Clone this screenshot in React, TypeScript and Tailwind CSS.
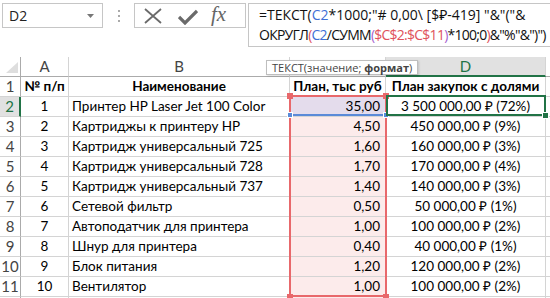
import React from 'react';

const rows = [
  { n: '1', name: 'Принтер HP Laser Jet 100 Color', plan: '35,00', buy: '3 500 000,00 ₽ (72%)' },
  { n: '2', name: 'Картриджы к принтеру HP', plan: '4,50', buy: '450 000,00 ₽ (9%)' },
  { n: '3', name: 'Картридж универсальный 725', plan: '1,60', buy: '160 000,00 ₽ (3%)' },
  { n: '4', name: 'Картридж универсальный 728', plan: '1,70', buy: '170 000,00 ₽ (4%)' },
  { n: '5', name: 'Картридж универсальный 737', plan: '1,40', buy: '140 000,00 ₽ (3%)' },
  { n: '6', name: 'Сетевой фильтр', plan: '0,50', buy: '50 000,00 ₽ (1%)' },
  { n: '7', name: 'Автоподатчик для принтера', plan: '1,00', buy: '100 000,00 ₽ (2%)' },
  { n: '8', name: 'Шнур для принтера', plan: '0,40', buy: '40 000,00 ₽ (1%)' },
  { n: '9', name: 'Блок питания', plan: '1,20', buy: '120 000,00 ₽ (2%)' },
  { n: '10', name: 'Вентилятор', plan: '1,00', buy: '100 000,00 ₽ (2%)' },
];

const cellFont = { fontFamily: 'Lato, "Liberation Sans", sans-serif' };
const uiFont = { fontFamily: '"Open Sans", "Noto Sans", sans-serif' };

const Handle = ({ className }: { className: string }) => (
  <div className={`absolute w-[6px] h-[6px] ${className}`} />
);

export default function App() {
  return (
    <div className="w-[550px] h-[298px] overflow-hidden bg-white relative" style={cellFont}>
      {/* formula bar */}
      <div className="flex items-start h-[57px] pt-[3px] pl-[2px]" style={uiFont}>
        <div className="shrink-0 w-[101px] h-[25px] border border-[#c6c6c6] flex items-center justify-between pl-[6px] pr-[8px] text-[14px] text-[#222]">
          <span>D2</span>
          <svg width="7" height="4" viewBox="0 0 7 4"><path d="M0 0h7L3.5 4z" fill="#777" /></svg>
        </div>
        <div className="shrink-0 w-[31px] h-[25px] flex flex-col items-center justify-center gap-[3px]">
          <div className="w-[2px] h-[2px] bg-[#aaa]" />
          <div className="w-[2px] h-[2px] bg-[#aaa]" />
          <div className="w-[2px] h-[2px] bg-[#aaa]" />
        </div>
        <div className="shrink-0 w-[112px] h-[25px] border border-[#c6c6c6] flex items-center">
          <svg width="20" height="18" viewBox="0 0 20 18" className="ml-[8px]">
            <path d="M2 2L18 16M18 2L2 16" stroke="#6a6a6a" strokeWidth="1.8" />
          </svg>
          <svg width="20" height="16" viewBox="0 0 20 16" className="ml-[15px] mt-[3px]">
            <path d="M1 8L7 14L19 2" stroke="#6a6a6a" strokeWidth="3.2" fill="none" />
          </svg>
          <span className="ml-[13px] text-[21px] italic text-[#666] leading-none -mt-[3px]" style={{ fontFamily: '"Liberation Serif", serif' }}>fx</span>
        </div>
        <div className="ml-[2px] flex-1 min-w-0 overflow-hidden h-[44px] border border-r-0 border-[#c6c6c6] pl-[10px] pt-[1px] text-[14px] leading-[20px] text-[#111] whitespace-nowrap">
          <div>
            =ТЕКСТ(<span className="text-[#3f70d6]">C2</span>*1000;"# 0,00\ [$₽-419] "&amp;"("&amp;
          </div>
          <div className="tracking-[-0.75px]">
            ОКРУГЛ<span className="text-[#e0525c]">(</span><span className="text-[#3f70d6]">C2</span>/СУММ<span className="text-[#a65fcf]">(</span><span className="text-[#e0525c]">$C$2:$C$11</span><span className="text-[#a65fcf]">)</span>*100;0<span className="text-[#e0525c]">)</span>&amp;"%"&amp;")")
          </div>
        </div>
      </div>

      {/* grid */}
      <div className="grid grid-cols-[21px_48px_221px_96px_160px_4px] auto-rows-[20px] text-[13.5px] text-black">
        {/* header */}
        <div className="h-[20px] border-r border-b border-[#ababab] relative">
          <svg width="12" height="11" viewBox="0 0 12 11" className="absolute left-[6px] top-[5px]">
            <path d="M12 0V11H0z" fill="#dedede" />
          </svg>
        </div>
        <div className="border-r border-b border-[#ababab] border-r-[#d4d4d4] flex items-center justify-center text-[15px] text-[#444]">A</div>
        <div className="border-r border-b border-[#ababab] border-r-[#d4d4d4] flex items-center justify-center text-[15px] text-[#444]">B</div>
        <div className="border-r border-b border-[#ababab] border-r-[#d4d4d4]" />
        <div className="bg-[#e1e1e1] border-r border-r-[#d4d4d4] border-b-2 border-b-[#217346] flex items-center justify-center text-[15px] text-[#217346]">D</div>
        <div className="border-b border-[#ababab]" />

        {/* row 1 */}
        <div className="border-r border-b border-[#d4d4d4] border-r-[#ababab] flex items-center justify-center text-[15px] text-[#444]">1</div>
        <div className="border-r border-b border-[#d4d4d4] flex items-center justify-center font-bold">№ п/п</div>
        <div className="border-r border-b border-[#d4d4d4] flex items-center justify-center font-bold">Наименование</div>
        <div className="border-r border-b border-[#d4d4d4] flex items-center justify-center font-bold whitespace-nowrap">План, тыс руб</div>
        <div className="border-r border-b border-[#d4d4d4] flex items-center justify-center font-bold whitespace-nowrap">План закупок с долями</div>
        <div className="border-b border-[#d4d4d4]" />

        {rows.map((r, i) => (
          <React.Fragment key={r.n}>
            <div
              className={
                i === 0
                  ? 'bg-[#e1e1e1] border-r-2 border-r-[#217346] border-b border-b-[#d4d4d4] flex items-center justify-center text-[15px] text-[#217346]'
                  : 'border-r border-b border-[#d4d4d4] border-r-[#ababab] flex items-center justify-center text-[15px] text-[#444]'
              }
            >
              {i + 2}
            </div>
            <div className="border-r border-b border-[#d4d4d4] flex items-center justify-center">{r.n}</div>
            <div className="border-r border-b border-[#d4d4d4] flex items-center pl-[3px] whitespace-nowrap">{r.name}</div>
            <div className={`border-r border-b border-[#d4d4d4] flex items-center justify-end pr-[5px] ${i === 0 ? 'bg-[#e4dcec]' : 'bg-[#fcebeb]'}`}>{r.plan}</div>
            <div className="border-r border-b border-[#d4d4d4] flex items-center justify-center whitespace-nowrap">{r.buy}</div>
            <div className="border-b border-[#d4d4d4]" />
          </React.Fragment>
        ))}
        <div className="border-r border-[#ababab]" />
        <div className="border-r border-[#d4d4d4]" />
        <div className="border-r border-[#d4d4d4]" />
        <div className="border-r border-[#d4d4d4] bg-[#fcebeb]" />
        <div className="border-r border-[#d4d4d4]" />
        <div />
      </div>

      {/* range reference $C$2:$C$11 */}
      <div className="absolute left-[289px] top-[95px] w-[98px] h-[202px] border-2 border-[#e8686b]" />
      {/* C2 reference */}
      <div className="absolute left-[291px] top-[114px] w-[94px] h-[2px] bg-[#5a8ad8]" />
      <Handle className="left-[287px] top-[93px] bg-[#e8686b]" />
      <Handle className="left-[383px] top-[93px] bg-[#e8686b]" />
      <Handle className="left-[287px] top-[112px] bg-[#5a8ad8] border border-white" />
      <Handle className="left-[383px] top-[112px] bg-[#5a8ad8] border border-white" />
      <Handle className="left-[287px] top-[294px] bg-[#e8686b]" />
      <Handle className="left-[383px] top-[294px] bg-[#e8686b]" />

      {/* selected D2 */}
      <div className="absolute left-[386px] top-[95px] w-[160px] h-[21px] border-2 border-[#217346]" />
      <div className="absolute left-[542px] top-[112px] w-[7px] h-[7px] bg-[#217346] border border-white" />

      {/* function tooltip */}
      <div
        className="absolute left-[266px] top-[60px] h-[15px] px-[5px] bg-white border border-[#bebebe] text-[11px] leading-[13px] text-[#444] whitespace-nowrap shadow-[1px_1px_2px_rgba(0,0,0,0.15)]"
        style={uiFont}
      >
        ТЕКСТ(значение; <b className="font-bold">формат</b>)
      </div>
    </div>
  );
}
